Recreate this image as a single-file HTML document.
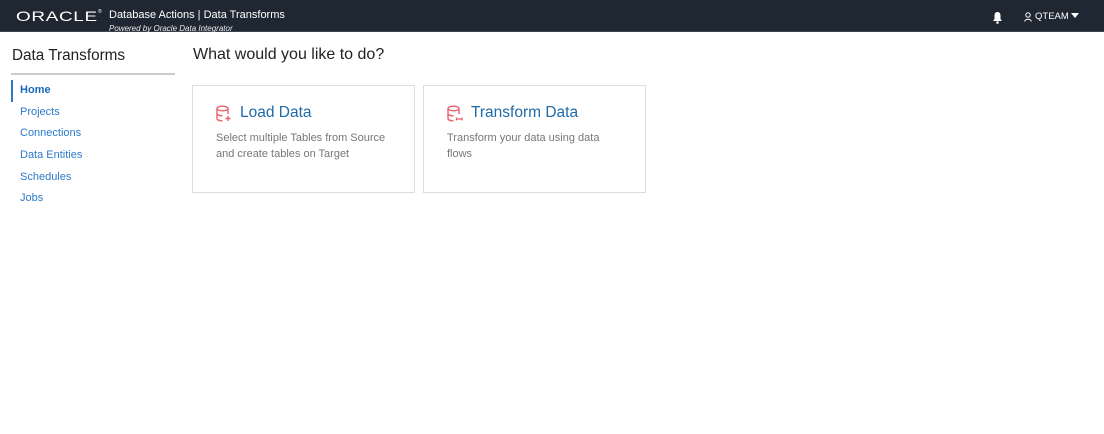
<!DOCTYPE html>
<html><head><style>
*{margin:0;padding:0;box-sizing:border-box}
body{width:1104px;height:434px;background:#fff;font-family:"Liberation Sans",sans-serif;position:relative;overflow:hidden}
.hdr{position:absolute;left:0;top:0;width:1104px;height:32px;background:#1f2733;border-bottom:1px solid #3a4250}
.logo{position:absolute;left:16px;top:8px;color:#fff;font-size:14px;letter-spacing:0.5px;transform:scaleX(1.35);transform-origin:left;line-height:16px}
.reg{position:absolute;left:98px;top:9px;color:#fff;font-size:5px}
.t1{position:absolute;left:109px;top:9px;color:#fff;font-size:11px}
.t2{position:absolute;left:109px;top:24px;color:#fff;font-size:8px;font-style:italic;opacity:.9}
.user{position:absolute;left:1035px;top:11px;color:#fff;font-size:9.5px}
.side{position:absolute;left:12px;top:47px}
.side h1{font-size:15.3px;font-weight:normal;color:#222}
.line{position:absolute;left:11px;top:73px;width:164px;height:2px;background:#ccc}
.nav{position:absolute;left:11px;top:80px}
.nav div{font-size:11px;color:#2b7bc8;height:21.7px;line-height:21px;padding-left:9px}
.nav .act{border-left:2px solid #2b7bc8;padding-left:7px;font-weight:bold;color:#1a6bbd}
h2{position:absolute;left:193px;top:46px;font-size:16px;font-weight:normal;color:#222}
.card{position:absolute;top:85px;width:223px;height:108px;border:1px solid #ddd}
.card .ti{position:absolute;left:47px;top:18px;font-size:15.5px;color:#1f6aa8}
.card .ds{position:absolute;left:23px;top:44px;font-size:11px;color:#777;line-height:16px;width:172px}
.card svg{position:absolute;left:23px;top:19px}
</style></head><body>
<div class="hdr">
<div class="logo">ORACLE</div><div class="reg">®</div>
<div class="t1">Database Actions | Data Transforms</div>
<div class="t2">Powered by Oracle Data Integrator</div>
<svg style="position:absolute;left:992px;top:11px" width="11" height="13" viewBox="0 0 11 13"><path d="M5.5 1C3 1 2.5 3 2.5 5V8L1 10H10L8.5 8V5C8.5 3 8 1 5.5 1Z" fill="#fff"/><circle cx="5.5" cy="11.5" r="1.3" fill="#fff"/></svg>
<svg style="position:absolute;left:1024px;top:12px" width="8" height="10" viewBox="0 0 8 10"><circle cx="4" cy="3" r="2.2" fill="none" stroke="#fff"/><path d="M0.7 9.5C1 6.5 7 6.5 7.3 9.5" fill="none" stroke="#fff"/></svg>
<div class="user">QTEAM</div>
<svg style="position:absolute;left:1071px;top:13px" width="8" height="6"><path d="M0 0H8L4 5Z" fill="#fff"/></svg>
</div>
<div class="side"><h1>Data Transforms</h1></div>
<div class="line"></div>
<div class="nav">
<div class="act">Home</div><div>Projects</div><div>Connections</div><div>Data Entities</div><div>Schedules</div><div>Jobs</div>
</div>
<h2>What would you like to do?</h2>
<div class="card" style="left:192px">
<svg width="16" height="17" viewBox="0 0 16 17"><ellipse cx="6.5" cy="3.5" rx="5.5" ry="2.3" fill="none" stroke="#e8636b" stroke-width="1.4"/><path d="M1 3.5V13.5C1 15 3.5 15.8 6.5 15.8M12 3.5V9M1 8.5C1 10 3.5 10.8 6.5 10.8" fill="none" stroke="#e8636b" stroke-width="1.4"/><path d="M12 11V16M9.5 13.5H14.5" stroke="#e8636b" stroke-width="1.4"/></svg>
<div class="ti">Load Data</div>
<div class="ds">Select multiple Tables from Source and create tables on Target</div>
</div>
<div class="card" style="left:423px">
<svg width="16" height="17" viewBox="0 0 16 17"><ellipse cx="6.5" cy="3.5" rx="5.5" ry="2.3" fill="none" stroke="#e8636b" stroke-width="1.4"/><path d="M1 3.5V13.5C1 15 3.5 15.8 6.5 15.8M12 3.5V9M1 8.5C1 10 3.5 10.8 6.5 10.8" fill="none" stroke="#e8636b" stroke-width="1.4"/><path d="M9.5 12.5V15.5M15 12.5V15.5M9.5 14H15" stroke="#e8636b" stroke-width="1.3"/></svg>
<div class="ti">Transform Data</div>
<div class="ds">Transform your data using data flows</div>
</div>
</body></html>
